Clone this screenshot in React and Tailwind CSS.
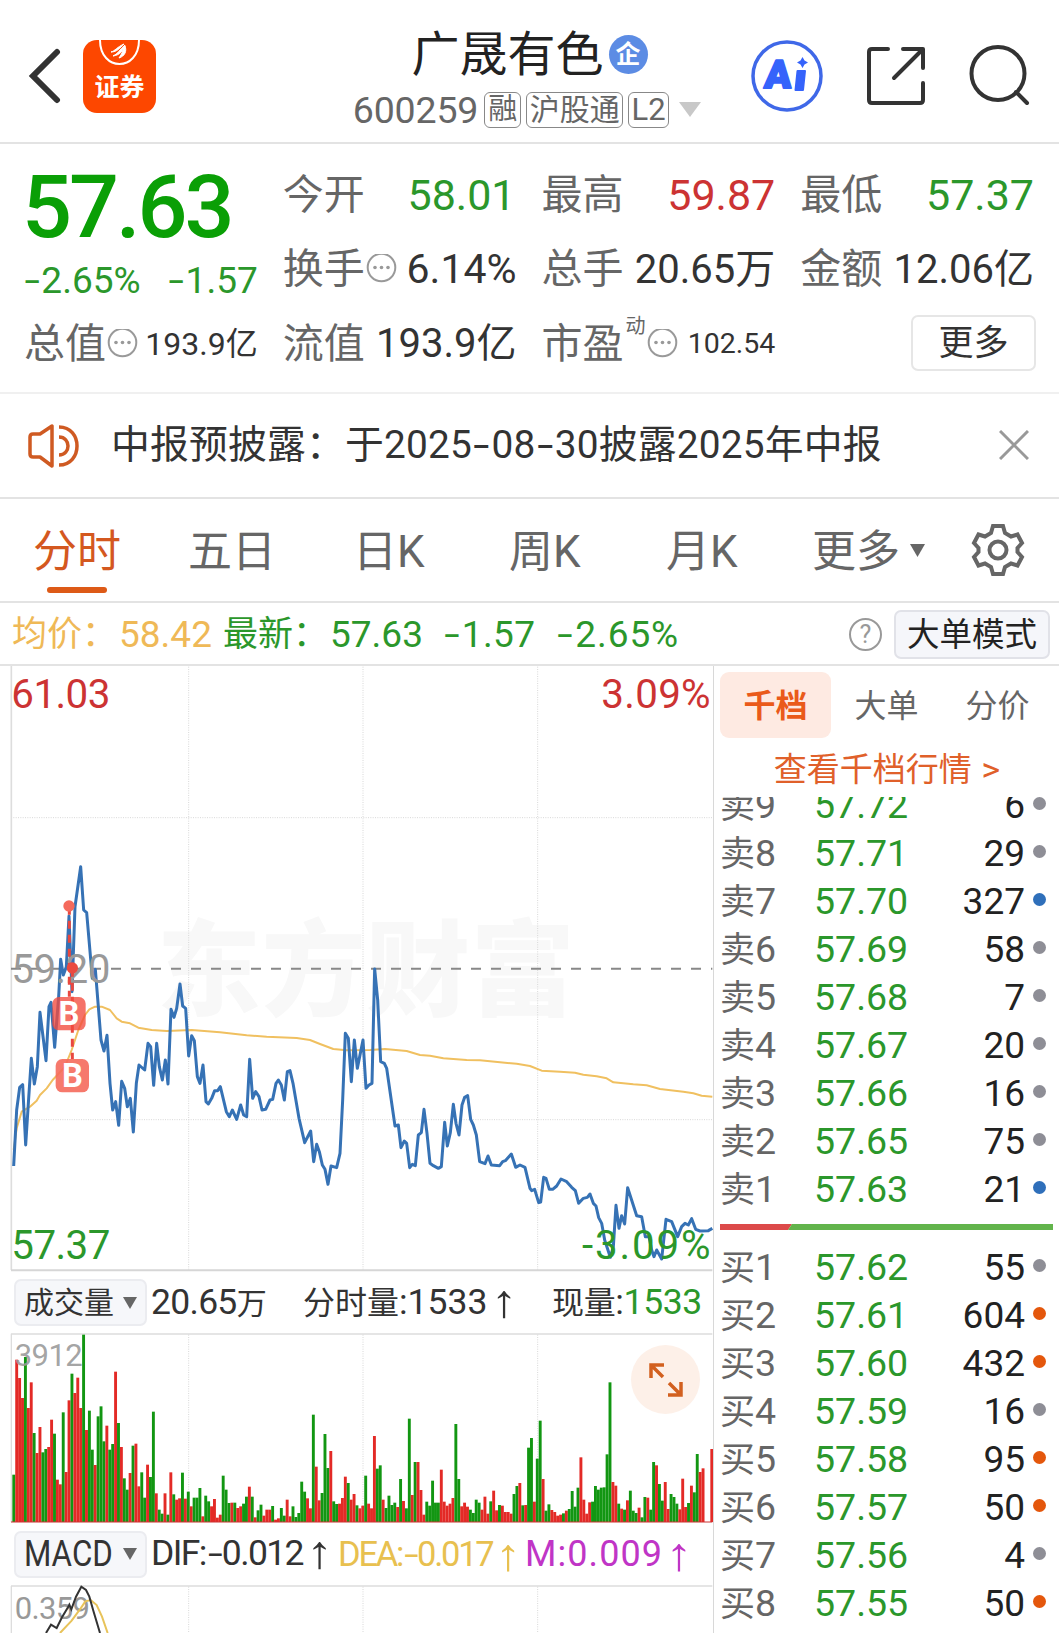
const PRICE_LINE =
  '41,948 50,780 59,712 68,704 77,885 86,745 94,625 103,702 112,650 120,487 138,632 147,470 153,457 164,592 176,440 182,328 190,375 199,350 207,198 216,425 225,170 242,50 251,180 260,188 277,385 286,358 303,570 312,603 321,556 330,700 338,780 347,755 356,826 365,694 374,715 382,770 391,745 400,846 409,700 417,645 434,660 444,580 452,590 461,706 470,580 478,650 487,690 496,630 504,702 513,478 522,502 530,475 540,402 548,468 557,475 566,618 575,557 583,572 592,680 600,700 609,645 618,755 625,762 635,745 644,722 653,722 661,710 679,785 688,800 697,780 710,808 722,765 731,795 740,800 749,628 758,745 767,725 777,740 786,780 797,778 810,750 818,748 828,700 835,690 844,705 853,750 862,665 870,662 879,700 897,805 914,878 932,843 941,935 950,883 958,905 967,945 975,958 984,1003 993,948 1010,953 1020,910 1028,750 1036,550 1045,565 1054,695 1063,570 1072,655 1089,570 1098,715 1107,705 1116,700 1124,357 1133,450 1142,635 1153,640 1160,655 1185,828 1195,825 1203,893 1213,873 1220,880 1229,953 1237,943 1246,947 1255,855 1264,848 1272,778 1281,850 1290,940 1300,947 1315,955 1324,950 1334,817 1342,888 1351,848 1360,763 1368,820 1377,855 1386,765 1394,742 1403,737 1412,808 1420,825 1429,855 1439,935 1455,941 1464,918 1474,945 1499,947 1508,935 1516,932 1534,912 1547,952 1560,945 1575,952 1590,1015 1595,1022 1604,1018 1616,1058 1622,1056 1631,982 1638,985 1648,1018 1658,1018 1670,1008 1683,987 1700,995 1715,1012 1726,1022 1736,1060 1750,1045 1762,1042 1770,1032 1780,1060 1788,1068 1796,1103 1805,1120 1814,1170 1831,1222 1840,1190 1848,1066 1857,1135 1865,1097 1874,1122 1883,1013 1910,1097 1925,1100 1936,1160 1947,1160 1955,1200 1962,1220 1970,1200 1985,1227 1998,1108 2015,1115 2033,1160 2045,1130 2055,1120 2065,1125 2075,1106 2087,1138 2100,1143 2125,1142 2137,1135';

const AVG_LINE =
  '41,900 50,835 65,785 90,770 110,752 120,735 140,715 158,690 175,672 195,650 215,600 235,540 255,495 268,478 285,470 305,470 330,480 350,505 365,515 390,520 415,533 455,540 500,543 575,540 660,547 740,556 800,560 890,564 930,570 960,582 1000,597 1040,601 1110,600 1155,597 1220,603 1260,615 1290,617 1330,625 1400,630 1440,631 1500,637 1550,641 1590,648 1625,662 1680,665 1725,668 1750,674 1790,679 1820,685 1840,697 1900,703 1940,706 1980,717 2050,725 2080,730 2105,737 2137,740';

// one entry per minute: direction + top of the bar in chart units (baseline is 757)
const VOLUME =
  'g615 r270 r325 r385 g262 r415 r338 g490 r550 r472 g548 g538 r532 r450 g492 r630 r644 g428 r607 r392 g312 r370 r324 r415 g195 r481 g423 g540 r586 g440 g410 g515 r468 g540 g523 r306 g460 r532 g626 g660 r610 g528 r522 r650 g608 g684 r585 g622 g426 r671 g720 g732 r671 g735 r608 g674 r690 r686 g609 r687 g666 r710 g684 g684 g655 r740 g678 g695 r710 r688 r744 r735 g618 g660 g700 r699 g699 r715 r710 g702 g681 r651 g681 r743 g722 g705 r738 r720 r720 g709 r750 r746 g715 g738 r690 r740 g710 g742 g730 g636 g666 r686 r716 g435 r591 r692 g670 g493 g595 r544 g695 g703 r702 r685 r621 g640 r690 r673 g707 r716 r708 g618 r702 r716 r499 g597 g587 r690 g715 g678 g706 g699 r712 g628 r694 g716 g447 r676 g577 r577 r661 r735 g696 g708 g633 g699 g699 r600 r696 r708 r702 r685 g463 g628 r710 r699 r711 g720 g730 g690 g699 r720 r681 r732 g695 r663 r722 g706 r708 r727 r727 r732 g673 g649 r640 g707 r706 g534 g505 r696 g567 g453 r628 g723 g704 r721 r727 r738 r735 g731 r723 g718 g664 g711 g654 r563 r690 r732 r698 g696 g649 g660 g654 g653 g554 g338 r637 r648 g702 r717 g720 r692 g663 g723 g730 r714 g743 g682 r684 g720 g577 r587 g643 g693 r637 r718 g673 g682 g702 r719 r627 r712 g700 r648 g668 g553 r607 r596 r757 r757 r538'.split(' ');

const ASKS = [
  ['卖9', '57.72', 6, 'gray'],
  ['卖8', '57.71', 29, 'gray'],
  ['卖7', '57.70', 327, 'blue'],
  ['卖6', '57.69', 58, 'gray'],
  ['卖5', '57.68', 7, 'gray'],
  ['卖4', '57.67', 20, 'gray'],
  ['卖3', '57.66', 16, 'gray'],
  ['卖2', '57.65', 75, 'gray'],
  ['卖1', '57.63', 21, 'blue'],
];

const BIDS = [
  ['买1', '57.62', 55, 'gray'],
  ['买2', '57.61', 604, 'orange'],
  ['买3', '57.60', 432, 'orange'],
  ['买4', '57.59', 16, 'gray'],
  ['买5', '57.58', 95, 'orange'],
  ['买6', '57.57', 50, 'orange'],
  ['买7', '57.56', 4, 'gray'],
  ['买8', '57.55', 50, 'orange'],
];

const DOTS = {
  gray: 'bg-[#8e8e96]',
  blue: 'bg-[#2f6fba]',
  orange: 'bg-[#e4570c]',
};

function Dash() {
  return <span className="mx-[0.11em] inline-block scale-x-150">-</span>;
}

function Up() {
  return <span className="ml-[0.2em] inline-block origin-center scale-x-150 scale-y-[1.3] font-['Liberation_Sans']">↑</span>;
}

function More() {
  return (
    <svg className="ml-px size-[31px] shrink-0" viewBox="0 0 31 31" fill="none">
      <circle cx="15.5" cy="13.5" r="13.8" stroke="#999" strokeWidth="2" />
      <circle cx="9" cy="13.5" r="1.8" fill="#999" />
      <circle cx="15.5" cy="13.5" r="1.8" fill="#999" />
      <circle cx="22" cy="13.5" r="1.8" fill="#999" />
    </svg>
  );
}

function Header() {
  return (
    <header className="flex h-[144px] items-center border-b-2 border-[#e3e3e3]">
      <svg className="ml-[27px] mt-[9px] h-[56px] w-[34px]" viewBox="0 0 34 56" fill="none">
        <path d="M30 4 L6 28 L30 52" stroke="#333" strokeWidth="6" strokeLinecap="round" />
      </svg>
      <div className="relative ml-[22px] mt-[10px] flex h-[73px] w-[73px] justify-center overflow-hidden rounded-[14px] bg-[#fd4700]">
        <svg className="absolute top-0 left-0" width="73" height="73" viewBox="0 0 73 73" fill="none">
          <path d="M17 0 C17 32 56 32 56 0" stroke="#fff" strokeWidth="2" />
          <path d="M28 12 C32 11 34 7 41 4 C37 8 34 12 28 12Z M30 16 C35 14 37 9 42 5 C40 11 37 15 30 16Z M36 18 C39 14 40 10 42 6 C44 11 42 16 36 18Z" fill="#fff" stroke="#fff" />
        </svg>
        <span className="mt-[33px] text-[25px] leading-[30px] font-bold text-white">证券</span>
      </div>
      <div className="ml-[195px] mt-[17px] flex w-[352px] flex-col items-center">
        <div className="ml-[5px] flex h-[59px] items-center">
          <h1 className="text-[48px] leading-[58px] text-[#222]">广晟有色</h1>
          <span className="ml-[5px] flex size-[39px] items-center justify-center rounded-full bg-[#5c8ce4] text-[25px] leading-none font-bold text-white">
            企
          </span>
        </div>
        <div className="flex h-[50px] items-center pt-px text-[#666]">
          <span className="mr-[6px] text-[37.500px] leading-[44px] tracking-[-0.005em]">600259</span>
          <span className="mr-[5px] flex h-[36px] w-[37px] items-center justify-center rounded-[6px] border border-[#888] text-[29px] leading-none">融</span>
          <span className="mr-[5px] flex h-[36px] w-[97px] items-center justify-center rounded-[6px] border border-[#888] text-[30px] leading-none">沪股通</span>
          <span className="flex h-[36px] w-[41px] items-center justify-center rounded-[6px] border border-[#888] text-[31px] leading-none">L2</span>
          <svg className="ml-[10px]" width="22" height="15" viewBox="0 0 22 15">
            <path d="M0 0H22L11 15Z" fill="#c8c8c8" />
          </svg>
        </div>
      </div>
      <svg className="ml-[48px] mt-[10px]" width="72" height="72" viewBox="0 0 72 72" fill="none">
        <circle cx="36" cy="36" r="34" stroke="#3f68e8" strokeWidth="3.5" />
        <text x="13" y="48" fontSize="39" fontWeight="900" fill="#3563fb" stroke="#3563fb" strokeWidth="2" strokeLinejoin="round" textLength="27" lengthAdjust="spacingAndGlyphs" transform="skewX(-4) translate(3 0)">A</text>
        <path d="M46.500 31 H54 L52 50 H44.500 Z" fill="#3563fb" stroke="#3563fb" strokeWidth="2" strokeLinejoin="round" />
        <path d="M51.500 17 L53.500 20.500 L57 22.500 L53.500 24.500 L51.500 28 L49.500 24.500 L46 22.500 L49.500 20.500Z" fill="#3563fb" />
      </svg>
      <svg className="ml-[43px] mt-[10px]" width="60" height="60" viewBox="0 0 60 60" fill="none" stroke="#333" strokeWidth="4" strokeLinecap="round" strokeLinejoin="round">
        <path d="M22 3H6Q3 3 3 6V54Q3 57 6 57H54Q57 57 57 54V37" />
        <path d="M37 3H57V22 M56 4L28 32" />
      </svg>
      <svg className="ml-[41px] mt-[10px]" width="64" height="64" viewBox="0 0 64 64" fill="none" stroke="#333" strokeWidth="4" strokeLinecap="round">
        <circle cx="31" cy="29.500" r="26.500" />
        <path d="M49 48L60 59" />
      </svg>
    </header>
  );
}

function Stat({ label, extra, value, valueClass }) {
  return (
    <div className="flex h-[74.5px] items-center justify-between">
      <div className="-ml-px flex items-center text-[41px] text-[#666]">
        <span>{label}</span>
        {extra}
      </div>
      <span className={valueClass}>{value}</span>
    </div>
  );
}

function Quote() {
  return (
    <section className="grid h-[250px] grid-cols-4 content-start gap-x-[26px] border-b-2 border-[#f0f0f0] px-[25px] pt-[14px] leading-none whitespace-nowrap">
      <div className="row-span-2 h-[149px] text-[#2b972b]">
        <div className="mt-[4px] -ml-[3px] text-[88px] leading-[90px] font-medium tracking-[-0.034em] text-[#0a9f06]">57.63</div>
        <div className="mt-[9px] -ml-[2px] flex justify-between text-[37px] leading-[40px]">
          <span><Dash />2.65%</span>
          <span><Dash />1.57</span>
        </div>
      </div>
      <Stat label="今开" value="58.01" valueClass="mr-px text-[43px] text-[#2b972b]" />
      <Stat label="最高" value="59.87" valueClass="text-[43px] text-[#cc3333]" />
      <Stat label="最低" value="57.37" valueClass="text-[43px] text-[#2b972b]" />
      <Stat label="换手" extra={<More />} value="6.14%" valueClass="text-[41px] text-[#333]" />
      <Stat label="总手" value="20.65万" valueClass="text-[40px] text-[#333]" />
      <Stat label="金额" value="12.06亿" valueClass="text-[40px] text-[#333]" />
      <Stat label="总值" extra={<More />} value="193.9亿" valueClass="text-[32px] text-[#333]" />
      <Stat label="流值" value="193.9亿" valueClass="text-[40px] text-[#333]" />
      <Stat
        label="市盈"
        extra={
          <>
            <span className="mb-[36px] ml-[2px] text-[20px]">动</span>
            <More />
          </>
        }
        value="102.54"
        valueClass="text-[28.500px] text-[#333]"
      />
      <div className="-mr-[2px] flex h-[72px] items-center justify-end">
        <button className="h-[56px] w-[125px] rounded-[7px] border-2 border-[#e6e6e6] text-[35px] text-[#333]">更多</button>
      </div>
    </section>
  );
}

function Notice() {
  return (
    <section className="flex h-[105px] items-center border-b-2 border-[#e3e3e3] pr-[30px] pl-[27px]">
      <svg width="54" height="46" viewBox="0 0 54 46" fill="none" stroke="#cf5a22" strokeWidth="3.500" strokeLinejoin="round">
        <path d="M25 3V43L13 34H6Q3 34 3 31V14Q3 11 6 11H13Z" />
        <path d="M32 4C56 4 56 42 32 42 M32 14C44 14 44 32 32 32" />
      </svg>
      <p className="ml-[30px] grow text-[38.800px] leading-none tracking-[0.005em] whitespace-nowrap text-[#333]">
        中报预披露：于2025<Dash />08<Dash />30披露2025年中报
      </p>
      <svg className="-mt-[2px]" width="30" height="30" viewBox="0 0 30 30" stroke="#999" strokeWidth="3">
        <path d="M1 1L29 29M29 1L1 29" />
      </svg>
    </section>
  );
}

function Tabs() {
  return (
    <nav className="flex h-[104px] items-center border-b-2 border-[#e3e3e3] pt-[3px] text-[44px] leading-none whitespace-nowrap text-[#666]">
      <div className="relative ml-[33px] w-[155px] text-[#d4581f]">
        分时
        <span className="absolute -bottom-[19px] left-[14px] h-[6px] w-[60px] rounded-full bg-[#dd5a17]" />
      </div>
      <div className="w-[165px]">五日</div>
      <div className="w-[156px]">日K</div>
      <div className="w-[157px]">周K</div>
      <div className="w-[146px]">月K</div>
      <div className="flex w-[159px] items-center">
        更多
        <svg className="mb-[3px] ml-[10px]" width="15" height="13" viewBox="0 0 15 13">
          <path d="M0 0H15L7.500 13Z" fill="#666" />
        </svg>
      </div>
      <svg className="-mt-[3px]" width="54" height="54" viewBox="0 0 54 54" fill="none" stroke="#666" strokeWidth="4">
        <path d="M22 3H32L34 10L40 13.500L46.500 11.500L51 20L46.500 25V29L51 34L46.500 42.500L40 40.500L34 44L32 51H22L20 44L14 40.500L7.500 42.500L3 34L7.500 29V25L3 20L7.500 11.500L14 13.500L20 10Z" />
        <circle cx="27" cy="27" r="8.500" />
      </svg>
    </nav>
  );
}

function InfoBar() {
  return (
    <section className="flex h-[63px] items-center border-b-2 border-[#e3e3e3] pt-px pr-[9px] pl-[12px] text-[37px] leading-none whitespace-nowrap">
      <div className="flex w-[211px] items-center text-[#efb957]">
        <span className="w-[107px] text-[35px]">均价：</span>58.42
      </div>
      <div className="flex grow items-center text-[#2b972b]">
        <span className="w-[107px] text-[35px]">最新：</span>
        <span className="w-[113px]">57.63</span>
        <span className="w-[113px] tracking-[0.01em]"><Dash />1.57</span>
        <span className="tracking-[0.025em]"><Dash />2.65%</span>
      </div>
      <span className="mr-[12px] flex size-[33px] items-center justify-center rounded-full border-2 border-[#999] text-[25px] text-[#999]">?</span>
      <button className="h-[49px] w-[156px] rounded-[7px] border-2 border-[#e1e2e8] bg-[#f5f6fa] pt-[2px] text-[32.500px] text-[#222]">大单模式</button>
    </section>
  );
}

function PriceChart() {
  return (
    <svg className="block" width="714" height="606" viewBox="0 -552 2142 1818" fill="none">
      <g fill="#f8f8f8" fontSize="312" fontWeight="900">
        <text x="470" y="473">东</text>
        <text x="785" y="473">方</text>
        <text x="1098" y="473">财</text>
        <text x="1412" y="473">富</text>
      </g>
      <g stroke="#d8d8d8" strokeWidth="3" strokeDasharray="3 4">
        <path d="M566 -550V1260M1089 -550V1260M1613 -550V1260M33 -97H2139M33 809H2139" />
      </g>
      <path d="M34 -555V1260" stroke="#ddd" strokeWidth="5" />
      <path d="M33 1261H2137" stroke="#d6d6d6" strokeWidth="6" />
      <path d="M33 356H2137" stroke="#888" strokeWidth="6" strokeDasharray="30 30" />
      <polyline points={AVG_LINE} stroke="#f0c060" strokeWidth="6" strokeLinejoin="round" />
      <polyline points={PRICE_LINE} stroke="#3672b5" strokeWidth="9" strokeLinejoin="round" />
      <g fontSize="121">
        <text x="34" y="-427" fill="#cc3333" textLength="297">61.03</text>
        <text x="1804" y="-427" fill="#cc3333" textLength="328">3.09%</text>
        <text x="34" y="400" fill="#999" textLength="297">59.20</text>
        <text x="34" y="1228" fill="#2b972b" textLength="297">57.37</text>
        <text x="1746" y="1228" fill="#2b972b" textLength="386">-3.09%</text>
      </g>
      <g stroke="#e9473f" strokeWidth="9" strokeDasharray="24 18">
        <path d="M208 170V440M217 356V628" />
      </g>
      <circle cx="207" cy="168" r="17" fill="#f56a5c" />
      <circle cx="217" cy="354" r="17" fill="#ea4a40" />
      <rect x="157" y="441" width="100" height="100" rx="20" fill="#f24a3d" fillOpacity="0.78" />
      <rect x="167" y="627" width="100" height="100" rx="20" fill="#f56a5c" fillOpacity="0.9" />
      <g fill="#fff" fontSize="98" fontWeight="700" textAnchor="middle">
        <text x="207" y="526">B</text>
        <text x="217" y="712">B</text>
      </g>
    </svg>
  );
}

function Picker({ children }) {
  return (
    <button className="mr-[4px] flex h-[47px] w-[133px] shrink-0 items-center justify-between rounded-[7px] border-2 border-[#ebecf0] bg-[#f6f7fa] pr-[8px] pl-[8px] text-[#333]">
      {children}
      <svg width="14" height="12" viewBox="0 0 14 12">
        <path d="M0 0H14L7 12Z" fill="#666" />
      </svg>
    </button>
  );
}

function VolumeChart() {
  return (
    <div className="relative">
      <svg className="block" width="714" height="190" viewBox="0 190 2142 570" fill="none">
        <path d="M33 193H2137M34 192V757" stroke="#ddd" strokeWidth="4" />
        <path d="M566 195V757M1089 195V757M1613 195V757" stroke="#d8d8d8" strokeWidth="3" strokeDasharray="3 4" />
        {VOLUME.map((bar, i) => {
          const top = Number(bar.slice(1));
          return (
            <rect
              key={i}
              x={37 + i * 8.725}
              y={top}
              width="8.7"
              height={757 - top}
              fill={bar[0] === 'r' ? '#e32a26' : '#129612'}
            />
          );
        })}
        <path d="M33 757H2137" stroke="#c33" strokeWidth="3" />
        <text x="44" y="290" fontSize="93" fill="#999" fillOpacity="0.9" textLength="204">3912</text>
      </svg>
      <div className="absolute top-[12px] left-[631px] flex size-[69px] items-center justify-center rounded-full bg-[#fdf0e8]">
        <svg width="35" height="35" viewBox="0 0 35 35" fill="none" stroke="#d2601f" strokeWidth="3.500">
          <path d="M16 3H3V16M3 3L15 15M33 20V33H20M33 33L21 21" />
        </svg>
      </div>
    </div>
  );
}

function MacdChart() {
  return (
    <svg className="block" width="714" height="48" viewBox="0 945 2142 144" fill="none">
      <path d="M33 948H2137M34 948V1089" stroke="#ddd" strokeWidth="4" />
      <path d="M566 950V1089M1089 950V1089M1613 950V1089" stroke="#d8d8d8" strokeWidth="3" strokeDasharray="3 4" />
      <text x="44" y="1047" fontSize="93" fill="#999" textLength="226">0.359</text>
      <path d="M180 1089L215 1052L242 1015L256 994L272 990L290 1005L306 1040L323 1089" stroke="#e8c35a" strokeWidth="6" />
      <path d="M138 1089L153 1064L170 1074L186 1042L204 1012L208 1004L214 1018L228 980L244 950L258 960L268 980L280 1022L300 1089" stroke="#333" strokeWidth="6" />
    </svg>
  );
}

function Level({ row }) {
  const [label, price, qty, dot] = row;
  return (
    <li className="flex h-[48px] shrink-0 items-center pt-[2px] text-[37.500px]">
      <span className="w-[94px] text-[#666]"><span className="text-[35px]">{label[0]}</span>{label[1]}</span>
      <span className="w-[100px] text-[#2b972b]">{price}</span>
      <span className="mb-[2px] grow text-right text-[37px] text-[#222]">{qty}</span>
      <span className={`mb-[5px] ml-[8px] size-[13px] rounded-full ${DOTS[dot]}`} />
    </li>
  );
}

function OrderBook() {
  return (
    <aside className="flex w-[346px] flex-col border-l border-[#d8d8d8] leading-none whitespace-nowrap">
      <div className="mt-[6px] ml-[6px] flex h-[66px] w-[333px] text-[32px] text-[#666]">
        <div className="flex w-[111px] items-center justify-center rounded-[9px] bg-[#feeae2] pt-[2px] font-bold text-[#ea5a1a]">千档</div>
        <div className="flex w-[111px] items-center justify-center pt-[2px]">大单</div>
        <div className="flex w-[111px] items-center justify-center pt-[2px]">分价</div>
      </div>
      <div className="flex h-[59px] items-center justify-center pt-[3px] text-[33px] text-[#e0602a]">
        查看千档行情<span className="ml-[10px] scale-x-110">&gt;</span>
      </div>
      <ul className="flex h-[416px] flex-col justify-end overflow-hidden pr-[13px] pl-[6px]">
        {ASKS.map((row) => <Level key={row[0]} row={row} />)}
      </ul>
      <svg className="mt-[11px] ml-[6px] shrink-0" width="333" height="6" viewBox="0 0 333 6">
        <path d="M0 0H72L68 6H0Z" fill="#dc4a4a" />
        <path d="M72 0H333V6H68Z" fill="#62b44c" />
      </svg>
      <ul className="mt-[13px] flex flex-col pr-[13px] pl-[6px]">
        {BIDS.map((row) => <Level key={row[0]} row={row} />)}
      </ul>
    </aside>
  );
}

export default function App() {
  return (
    <div className="h-[1633px] w-[1059px] overflow-hidden bg-white font-['Roboto','Noto_Sans_CJK_SC',sans-serif]">
      <Header />
      <Quote />
      <Notice />
      <Tabs />
      <InfoBar />
      <div className="flex h-[967px]">
        <main className="w-[713px] shrink-0 overflow-hidden">
          <PriceChart />
          <div className="flex h-[61px] items-center pl-[14px] text-[35.500px] leading-none whitespace-nowrap text-[#333]">
            <Picker><span className="text-[30px]">成交量</span></Picker>
            <span className="w-[152px] tracking-[-0.02em]">20.65<span className="text-[30px]">万</span></span>
            <span className="w-[249px]"><span className="text-[32px]">分时量</span>:1533<Up /></span>
            <span className="tracking-[-0.01em]"><span className="text-[32px]">现量</span>:<span className="text-[#2b972b]">1533</span></span>
          </div>
          <VolumeChart />
          <div className="flex h-[62px] items-center pl-[14px] text-[36px] leading-none whitespace-nowrap text-[#333]">
            <Picker><span className="w-[88px] origin-left scale-x-[0.87] text-left">MACD</span></Picker>
            <span className="w-[187px] text-[35.500px] tracking-[-0.045em]">DIF:<Dash />0.012<Up /></span>
            <span className="w-[187px] text-[34.500px] tracking-[-0.065em] text-[#e8c04f]">DEA:<Dash />0.017<Up /></span>
            <span className="tracking-[0.03em] text-[#c035c6]">M:0.009<Up /></span>
          </div>
          <MacdChart />
        </main>
        <OrderBook />
      </div>
    </div>
  );
}
